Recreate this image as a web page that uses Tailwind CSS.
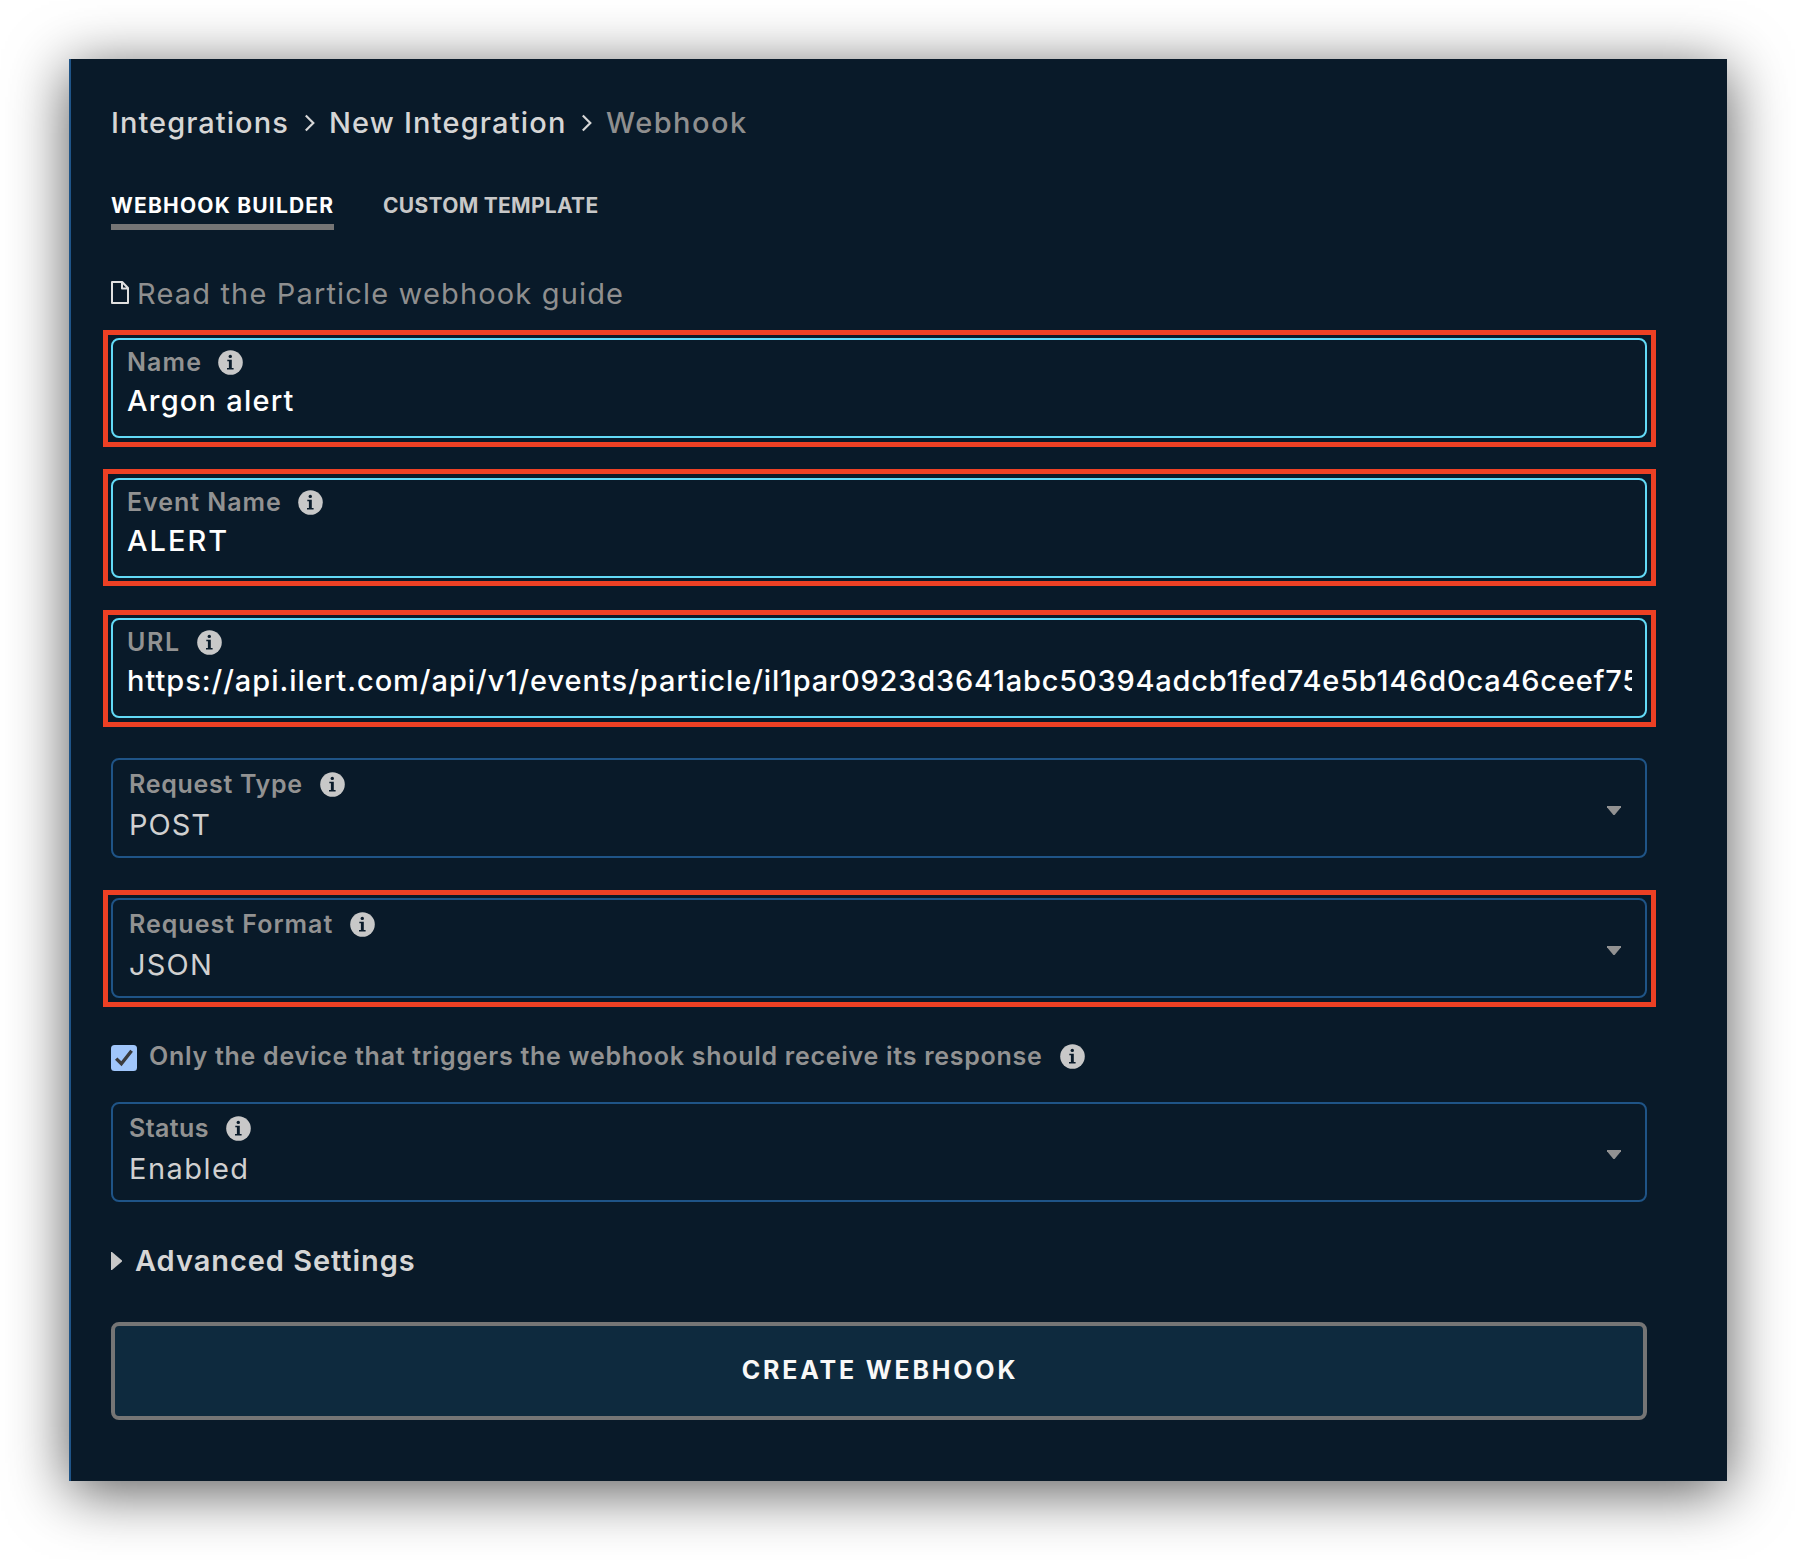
<!DOCTYPE html>
<html lang="en">
<head>
<meta charset="utf-8">
<title>New Webhook Integration</title>
<script src="https://cdn.jsdelivr.net/npm/@tailwindcss/browser@4"></script>
</head>
<body class="bg-white font-['Inter',sans-serif]">
<svg class="hidden">
  <symbol id="info" viewBox="0 0 25 25">
    <circle cx="12.5" cy="12.5" r="12.3" fill="#c8c8c8"/>
    <circle cx="12.3" cy="6.4" r="1.7" fill="#0a1b2a"/>
    <path fill="#0a1b2a" d="M9.3 9.7h4.5v8.2h1.8v1.6H9v-1.6h1.9v-6.6H9.3z"/>
  </symbol>
  <symbol id="caret" viewBox="0 0 14 9"><path fill="#929292" d="M0 0h14v1.2L7.6 9H6.4L0 1.2z"/></symbol>
  <symbol id="chevron" viewBox="0 0 12 18"><path fill="none" stroke="#d6d6d6" stroke-width="2.2" d="M1.8 1.5L9.3 9l-7.5 7.5"/></symbol>
</svg>
<div class="w-[1796px] h-[1560px] overflow-hidden pt-[59px] pl-[69px]">
<main class="w-[1658px] h-[1422px] bg-[#091a29] border-l-2 border-[#1f5487] shadow-[0_10px_56px_rgba(0,0,0,0.66)] pl-[40px] pr-[80px] pt-[48px]">

  <nav class="flex items-center h-8 text-[29px] leading-8 font-medium text-[#d6d6d6] whitespace-nowrap">
    <span class="w-[193px] tracking-[1.05px]">Integrations</span>
    <svg class="w-3 h-[18px] mr-[13px]"><use href="#chevron"/></svg>
    <span class="w-[252px] tracking-[1.18px]">New Integration</span>
    <svg class="w-3 h-[18px] mr-[13px]"><use href="#chevron"/></svg>
    <span class="tracking-[1.5px] text-[#8f8f8f]">Webhook</span>
  </nav>

  <div class="flex mt-[55px] h-9 text-[21px] leading-6 font-bold whitespace-nowrap">
    <span class="w-[223px] border-b-6 border-[#757575] text-white tracking-[1.2px]">WEBHOOK BUILDER</span>
    <span class="ml-[49px] text-[#c8c8c8] tracking-[0.29px]">CUSTOM TEMPLATE</span>
  </div>

  <a class="flex mt-[48px] h-8 text-[29px] leading-8 text-[#8f8f8f] tracking-[1.16px] whitespace-nowrap">
    <svg class="w-[18px] h-[23px] mt-[3px] mr-[8px]" viewBox="0 0 18 23" fill="none" stroke="#e0e0e0" stroke-width="2" stroke-linejoin="round"><path d="M1 1h10.2L17 7v15H1zM11 1v6.6h6"/></svg>
    <span>Read the Particle webhook guide</span>
  </a>

  <section class="relative mt-[28px] h-[100px] border-2 border-[#62daf7] rounded-lg pl-[14px] pr-[13px] pt-[8px]">
    <div class="absolute -left-[10px] -top-[10px] w-[1553px] h-[117px] border-5 border-[#ed4024]"></div>
    <div class="flex items-center h-7 text-[25px] font-semibold text-[#929292]"><span class="mt-[2px] tracking-[1.1px]">Name</span><svg class="ml-[16px] w-[25px] h-[25px]"><use href="#info"/></svg></div>
    <div class="mt-[7px] h-9 leading-9 text-[29px] font-medium text-white tracking-[1.22px]">Argon alert</div>
  </section>

  <section class="relative mt-[40px] h-[100px] border-2 border-[#62daf7] rounded-lg pl-[14px] pr-[13px] pt-[8px]">
    <div class="absolute -left-[10px] -top-[11px] w-[1553px] h-[117px] border-5 border-[#ed4024]"></div>
    <div class="flex items-center h-7 text-[25px] font-semibold text-[#929292]"><span class="mt-[2px] tracking-[0.95px]">Event Name</span><svg class="ml-[16px] w-[25px] h-[25px]"><use href="#info"/></svg></div>
    <div class="mt-[7px] h-9 leading-9 text-[29px] font-medium text-white tracking-[2px]">ALERT</div>
  </section>

  <section class="relative mt-[40px] h-[100px] border-2 border-[#62daf7] rounded-lg pl-[14px] pr-[13px] pt-[8px]">
    <div class="absolute -left-[10px] -top-[10px] w-[1553px] h-[117px] border-5 border-[#ed4024]"></div>
    <div class="flex items-center h-7 text-[25px] font-semibold text-[#929292]"><span class="mt-[2px] tracking-[1.7px]">URL</span><svg class="ml-[16px] w-[25px] h-[25px]"><use href="#info"/></svg></div>
    <div class="mt-[7px] h-9 leading-9 text-[29px] font-medium text-white tracking-[0.96px] overflow-hidden whitespace-nowrap">https://api.ilert.com/api/v1/events/particle/<span class="tracking-[0.78px]">il1par0923d3641abc50394adcb1fed74e5b146d0ca46ceef75</span></div>
  </section>

  <section class="relative mt-[40px] h-[100px] border-2 border-[#1f5487] rounded-lg pl-[16px] pt-[10px]">
    <div class="flex items-center h-7 text-[25px] font-semibold text-[#929292]"><span class="mt-[2px] tracking-[0.7px]">Request Type</span><svg class="ml-[17px] w-[25px] h-[25px]"><use href="#info"/></svg></div>
    <div class="mt-[9px] h-9 leading-9 text-[29px] text-[#d0d0d0] tracking-[1px]">POST</div>
    <svg class="absolute right-[24px] top-[46px] w-[14px] h-[9px]"><use href="#caret"/></svg>
  </section>

  <section class="relative mt-[40px] h-[100px] border-2 border-[#1f5487] rounded-lg pl-[16px] pt-[10px]">
    <div class="absolute -left-[10px] -top-[10px] w-[1553px] h-[117px] border-5 border-[#ed4024]"></div>
    <div class="flex items-center h-7 text-[25px] font-semibold text-[#929292]"><span class="mt-[2px] tracking-[1px]">Request Format</span><svg class="ml-[17px] w-[25px] h-[25px]"><use href="#info"/></svg></div>
    <div class="mt-[9px] h-9 leading-9 text-[29px] text-[#d0d0d0] tracking-[1.2px]">JSON</div>
    <svg class="absolute right-[24px] top-[46px] w-[14px] h-[9px]"><use href="#caret"/></svg>
  </section>

  <label class="flex items-center mt-[44px] h-7 text-[25px] font-semibold text-[#929292] whitespace-nowrap">
    <svg class="w-[26px] h-[26px] mt-[4px] mr-[12px]" viewBox="0 0 26 26"><rect width="26" height="26" rx="3.5" fill="#a0c6fb"/><path d="M5.2 13.6l5.2 5.2L20.6 5.8" fill="none" stroke="#3a3b3d" stroke-width="3.4"/></svg>
    <span class="mt-[2px] tracking-[0.73px]">Only the device that triggers the webhook should receive its response</span>
    <svg class="ml-[17px] w-[25px] h-[25px]"><use href="#info"/></svg>
  </label>

  <section class="relative mt-[32px] h-[100px] border-2 border-[#1f5487] rounded-lg pl-[16px] pt-[10px]">
    <div class="flex items-center h-7 text-[25px] font-semibold text-[#929292]"><span class="mt-[2px] tracking-[0.4px]">Status</span><svg class="ml-[17px] w-[25px] h-[25px]"><use href="#info"/></svg></div>
    <div class="mt-[9px] h-9 leading-9 text-[29px] text-[#d0d0d0] tracking-[1.45px]">Enabled</div>
    <svg class="absolute right-[24px] top-[46px] w-[14px] h-[9px]"><use href="#caret"/></svg>
  </section>

  <div class="flex items-center mt-[43px] h-8 text-[29px] leading-8 font-semibold text-[#d6d6d6] tracking-[0.95px]">
    <svg class="w-[11px] h-[18px] mr-[13px]" viewBox="0 0 11 18"><path fill="#c8c8c8" d="M0 0h1l10 8.5v1L1 18H0z"/></svg>
    <span>Advanced Settings</span>
  </div>

  <button class="block w-full mt-[45px] h-[98px] border-4 border-[#757575] rounded-lg bg-[#0e2a3e] pl-[2px] text-[25px] font-bold text-[#f8f8f8] tracking-[2.8px]">CREATE WEBHOOK</button>
</main>
</div>
</body>
</html>
